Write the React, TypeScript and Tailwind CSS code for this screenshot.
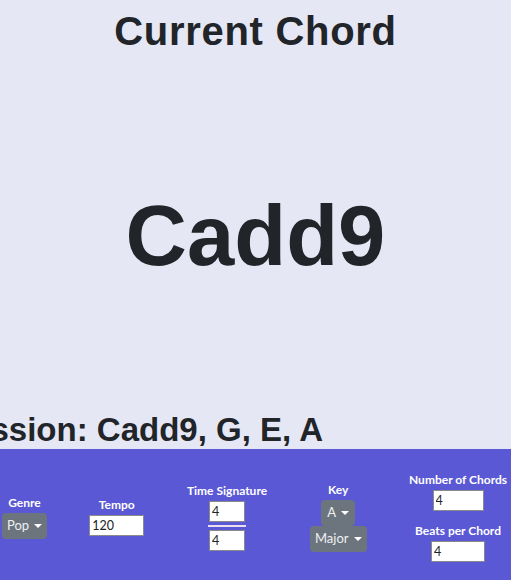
import { ReactNode } from "react";

const heading = { fontFamily: '"Liberation Sans", Arial, sans-serif' };
const ui = { fontFamily: 'Lato, "Open Sans", sans-serif' };

function Caret() {
  return (
    <span className="ml-[5px] inline-block h-0 w-0 border-x-[4px] border-t-[4px] border-x-transparent border-t-white align-middle" />
  );
}

function DropButton(props: { label: string; className?: string }) {
  return (
    <button
      className={`flex items-center justify-center rounded-[4px] bg-[#6c757d] text-[13px] text-[#eef0f2] ${props.className ?? ""}`}
    >
      {props.label}
      <Caret />
    </button>
  );
}

function Field(props: { value: string; className?: string }) {
  return (
    <input
      readOnly
      value={props.value}
      className={`h-[21px] border border-[#8a8a8a] bg-white px-[2px] text-[12.5px] text-[#222] outline-none ${props.className ?? ""}`}
    />
  );
}

function Column(props: { label: string; width: string; children: ReactNode }) {
  return (
    <div className={`flex flex-col items-center ${props.width}`}>
      <p className="whitespace-nowrap text-[12px] leading-[14px] font-bold text-white">
        {props.label}
      </p>
      <div className="mt-[3px] flex flex-col items-center">{props.children}</div>
    </div>
  );
}

export default function App() {
  return (
    <div className="flex h-[580px] w-[511px] flex-col overflow-hidden bg-[#e5e7f4]" style={ui}>
      <div className="flex flex-1 flex-col text-[#212529]" style={heading}>
        <h1 className="mt-[7px] text-center text-[40px] leading-[48px] font-bold tracking-[0.7px]">
          Current Chord
        </h1>
        <p className="mt-[130px] text-center text-[85px] leading-[102px] font-bold">
          Cadd9
        </p>
        <div className="mt-auto flex w-[323px] justify-end overflow-hidden">
          <h2 className="whitespace-nowrap text-[33px] leading-[39px] font-bold">
            Chord Progression: Cadd9, G, E, A
          </h2>
        </div>
      </div>

      <div className="flex h-[131px] shrink-0 items-center justify-between bg-[#5a58d5] pt-[5px] pr-[4px] pl-[2px]">
        <Column label="Genre" width="w-[45px]">
          <DropButton label="Pop" className="h-[26px] w-[45px]" />
        </Column>

        <Column label="Tempo" width="w-[55px]">
          <Field value="120" className="w-[55px]" />
        </Column>

        <Column label="Time Signature" width="w-[81px]">
          <Field value="4" className="w-[36px]" />
          <div className="my-[3px] h-[2px] w-[38px] bg-[#eadff0]" />
          <Field value="4" className="w-[36px]" />
        </Column>

        <Column label="Key" width="w-[57px]">
          <DropButton label="A" className="h-[26px] w-[34px]" />
          <DropButton label="Major" className="h-[26px] w-[57px]" />
        </Column>

        <div className="flex w-[98px] flex-col items-center">
          <Column label="Number of Chords" width="w-[98px]">
            <Field value="4" className="w-[51px]" />
          </Column>
          <div className="mt-[13px]">
            <Column label="Beats per Chord" width="w-[98px]">
              <Field value="4" className="w-[54px]" />
            </Column>
          </div>
        </div>
      </div>
    </div>
  );
}
